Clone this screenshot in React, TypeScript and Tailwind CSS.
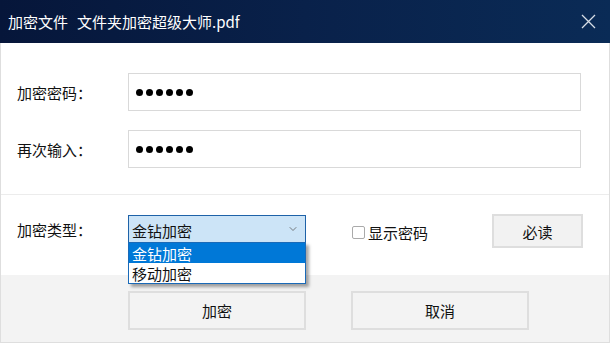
import { ChevronDown } from "lucide-react";

const cjk = { fontFamily: '"Noto Sans CJK SC", "Noto Sans", sans-serif' };

const Dots = () => (
  <div className="flex items-center gap-[3px] pl-[7px]">
    {[0, 1, 2, 3, 4, 5].map((i) => (
      <div key={i} className="w-[7px] h-[7px] rounded-full bg-black" />
    ))}
  </div>
);

const App = () => {
  return (
    <div className="w-[610px] h-[343px] flex flex-col bg-white overflow-hidden text-[15px] text-[#111]" style={cjk}>
      {/* Title bar */}
      <div className="h-[43px] flex items-center justify-between pl-[8px] pr-[14px] bg-gradient-to-r from-[#06163a] via-[#09214a] to-[#0a2b56] text-white">
        <div className="flex items-center leading-none text-[15px]">
          <span>加密文件</span>
          <span className="ml-[9px]">文件夹加密超级大师.pdf</span>
        </div>
        <svg width="15" height="15" viewBox="0 0 15 15" className="text-[#d6dde6]">
          <path d="M1 1L14 14M14 1L1 14" stroke="currentColor" strokeWidth="1.3" />
        </svg>
      </div>

      {/* Body */}
      <div className="flex-1 flex flex-col border-x border-b border-[#dedede]">
        {/* Passwords */}
        <div className="flex flex-col gap-[19px] pt-[30px] pb-[26px] pl-[16px] border-b border-[#ececec]">
          <div className="flex items-center">
            <div className="w-[111px] leading-none">加密密码：</div>
            <div className="w-[453px] h-[38px] border border-[#d9d9d9] flex items-center">
              <Dots />
            </div>
          </div>
          <div className="flex items-center">
            <div className="w-[111px] leading-none">再次输入：</div>
            <div className="w-[453px] h-[38px] border border-[#d9d9d9] flex items-center">
              <Dots />
            </div>
          </div>
        </div>

        {/* Options */}
        <div className="h-[80px] flex items-start pt-[18px] pl-[16px]">
          <div className="w-[111px] h-[28px] mt-[2px] flex items-center leading-none">加密类型：</div>
          <div className="relative mt-[2px]">
            <div className="w-[178px] h-[28px] border border-[#1e62a8] bg-[#cce4f7] flex items-center justify-between pl-[3px] pr-[6px] leading-none">
              <span className="mt-[2px]">金钻加密</span>
              <ChevronDown className="w-[12px] h-[12px] text-[#555]" strokeWidth={1.5} />
            </div>
            <div className="absolute left-0 top-[27px] w-[178px] border border-[#1a6ab8] bg-white shadow-[3px_3px_3px_rgba(0,0,0,0.35)] z-10">
              <div className="h-[20px] flex items-center pl-[3px] bg-[#0078d7] text-white leading-none">金钻加密</div>
              <div className="h-[20px] flex items-center pl-[3px] leading-none">移动加密</div>
            </div>
          </div>
          <div className="ml-[46px] h-[28px] mt-[5px] flex items-center">
            <div className="w-[13px] h-[13px] border border-[#aaaaaa] rounded-[2px] bg-white" />
            <span className="ml-[3px] leading-none">显示密码</span>
          </div>
          <button className="ml-[64px] mt-[1px] w-[91px] h-[34px] bg-[#f2f2f2] border-2 border-[#dedede] leading-none">
            必读
          </button>
        </div>

        {/* Bottom buttons */}
        <div className="flex-1 bg-[#f3f3f3] flex items-start pt-[16px] pl-[127px] gap-[45px]">
          <button className="w-[178px] h-[39px] bg-[#f3f3f3] border-2 border-[#dedede] leading-none">加密</button>
          <button className="w-[178px] h-[39px] bg-[#f3f3f3] border-2 border-[#dedede] leading-none">取消</button>
        </div>
      </div>
    </div>
  );
};

export default App;
